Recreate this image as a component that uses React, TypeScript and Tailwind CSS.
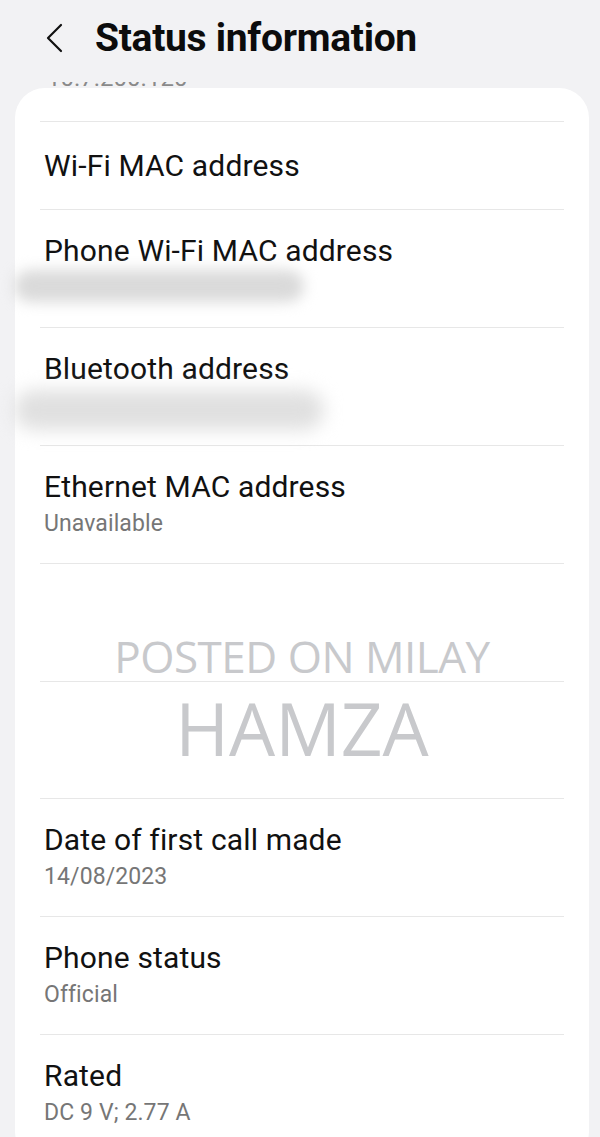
import React from "react";

const font = { fontFamily: "Roboto, 'Noto Sans', sans-serif" };

function Divider() {
  return <div className="mx-[25px] h-px bg-[#e7e7e7]" />;
}

function Row({ title, sub, smudge }: { title: string; sub?: string; smudge?: "a" | "b" }) {
  if (!sub && !smudge) {
    return (
      <div className="h-[87px] pl-[29px] pt-[27px]">
        <div className="text-[30px] leading-[34px] tracking-[0.15px] text-[#111]">{title}</div>
      </div>
    );
  }
  return (
    <div className="h-[117px] pl-[29px] pt-[24px]">
      <div className="text-[30px] leading-[34px] tracking-[0.15px] text-[#111]">{title}</div>
      {sub ? (
        <div className="mt-[6px] text-[23px] leading-[28px] tracking-[0.1px] text-[#767676]">{sub}</div>
      ) : smudge === "a" ? (
        <div className="-ml-[30px] mt-[2px] h-[32px] w-[290px] rounded-full bg-[#dadada] blur-[7px]" />
      ) : (
        <div className="-ml-[30px] mt-[4px] h-[40px] w-[310px] rounded-full bg-[#e0e0e0] blur-[9px]" />
      )}
    </div>
  );
}

export default function App() {
  return (
    <div className="min-h-[1137px] w-[600px] overflow-hidden bg-[#f2f2f4]" style={font}>
      <div className="flex h-[82px] items-center pl-[44px]">
        <svg width="22" height="30" viewBox="0 0 22 30" className="mb-[6px]">
          <path d="M17 2 L4 15 L17 28" fill="none" stroke="#111" strokeWidth="2.2" strokeLinecap="round" strokeLinejoin="round" />
        </svg>
        <div className="mb-[6px] ml-[29px] text-[39px] font-bold tracking-[-0.3px] text-[#0c0c0c]">Status information</div>
      </div>
      <div className="relative h-[6px] overflow-hidden pl-[47px]">
        <div className="-mt-[18px] text-[24px] leading-[28px] text-[#8a8a8a]">10.7.200.120</div>
      </div>
      <div className="ml-[15px] mr-[11px] rounded-[30px] bg-white pb-[10px]">
        <div className="h-[33px]" />
        <Divider />
        <Row title="Wi-Fi MAC address" />
        <Divider />
        <Row title="Phone Wi-Fi MAC address" smudge="a" />
        <Divider />
        <Row title="Bluetooth address" smudge="b" />
        <Divider />
        <Row title="Ethernet MAC address" sub="Unavailable" />
        <Divider />
        <div className="relative">
          <div className="h-[117px]" />
          <Divider />
          <div className="h-[116px]" />
          <div className="pointer-events-none absolute inset-x-0 top-[65px] flex flex-col items-center text-[#c8c9cc]" style={{ fontFamily: "'Open Sans', sans-serif" }}>
            <div className="text-[44px] leading-[54px] tracking-[-0.5px]">POSTED ON MILAY</div>
            <div className="mt-[4px] text-[73px] leading-[82px]">HAMZA</div>
          </div>
        </div>
        <Divider />
        <Row title="Date of first call made" sub="14/08/2023" />
        <Divider />
        <Row title="Phone status" sub="Official" />
        <Divider />
        <Row title="Rated" sub="DC 9 V; 2.77 A" />
      </div>
    </div>
  );
}
